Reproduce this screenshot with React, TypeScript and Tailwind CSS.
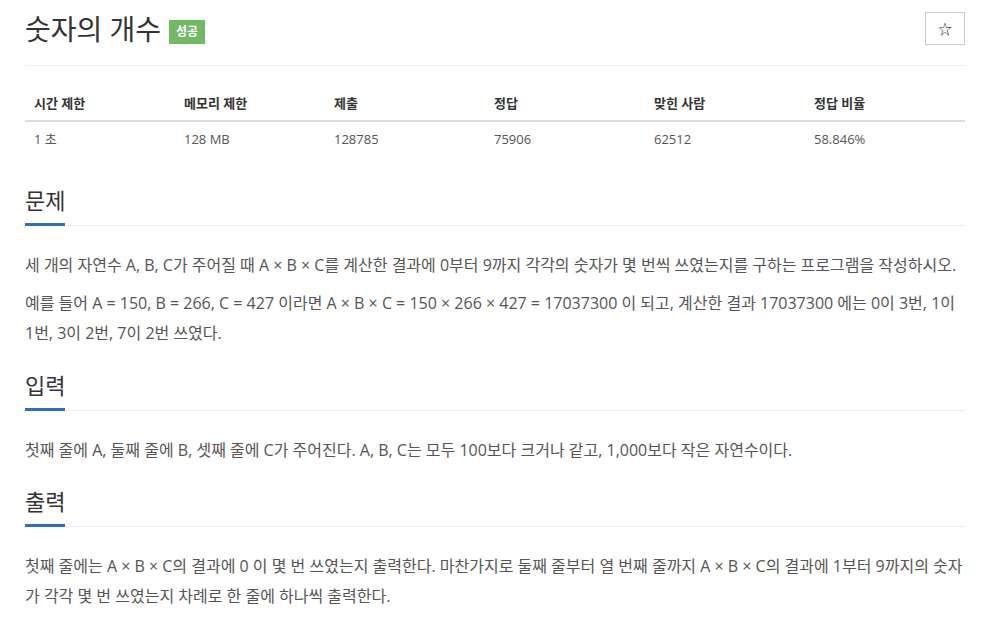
import React from 'react';

const font = { fontFamily: '"Open Sans", "Noto Sans CJK KR", sans-serif' };

const stats = [
  { label: '시간 제한', value: '1 초', w: 'w-[150px]' },
  { label: '메모리 제한', value: '128 MB', w: 'w-[150px]' },
  { label: '제출', value: '128785', w: 'w-[160px]' },
  { label: '정답', value: '75906', w: 'w-[160px]' },
  { label: '맞힌 사람', value: '62512', w: 'w-[160px]' },
  { label: '정답 비율', value: '58.846%', w: 'w-[160px]' },
];

const SectionTitle: React.FC<{ title: string }> = ({ title }) => (
  <div className="border-b border-dotted border-[#d8dce8] mb-[24px]">
    <h2 className="inline-block text-[22px] leading-[34px] text-[#333] border-b-[3px] border-[#2f6fb8] pb-[6px] mb-[-1px]">
      {title}
    </h2>
  </div>
);

const App: React.FC = () => {
  return (
    <div className="w-[989px] h-[620px] bg-white overflow-hidden pl-[25px] pr-[24px] text-[#555]" style={font}>
      <div className="flex items-start justify-between pt-[11px] pb-[18px] border-b border-[#eee]">
        <div className="flex items-center gap-[8px]">
          <h1 className="text-[28px] leading-[36px] text-[#333]">숫자의 개수</h1>
          <span className="bg-[#71b965] text-white text-[12px] font-bold leading-none px-[7px] py-[6px] mt-[5px]">성공</span>
        </div>
        <button className="w-[40px] h-[33px] mt-[1px] border border-[#ccc] flex items-center justify-center text-[#333] text-[14px]">
          ☆
        </button>
      </div>

      <div className="mt-[28px] flex border-b-2 border-[#ddd]">
        {stats.map((s) => (
          <div key={s.label} className={`${s.w} px-[9px] pb-[6px] text-[13px] font-bold text-[#333]`}>
            {s.label}
          </div>
        ))}
      </div>
      <div className="flex">
        {stats.map((s) => (
          <div key={s.label} className={`${s.w} px-[9px] pt-[8px] text-[13px] text-[#555]`}>
            {s.value}
          </div>
        ))}
      </div>

      <div className="mt-[34px]">
        <SectionTitle title="문제" />
        <div className="text-[16px] leading-[30px]">
          <p className="mb-[8px]">세 개의 자연수 A, B, C가 주어질 때 A × B × C를 계산한 결과에 0부터 9까지 각각의 숫자가 몇 번씩 쓰였는지를 구하는 프로그램을 작성하시오.</p>
          <p>예를 들어 A = 150, B = 266, C = 427 이라면 A × B × C = 150 × 266 × 427 = 17037300 이 되고, 계산한 결과 17037300 에는 0이 3번, 1이 1번, 3이 2번, 7이 2번 쓰였다.</p>
        </div>
      </div>

      <div className="mt-[20px]">
        <SectionTitle title="입력" />
        <p className="text-[16px] leading-[30px]">첫째 줄에 A, 둘째 줄에 B, 셋째 줄에 C가 주어진다. A, B, C는 모두 100보다 크거나 같고, 1,000보다 작은 자연수이다.</p>
      </div>

      <div className="mt-[19px]">
        <SectionTitle title="출력" />
        <p className="text-[16px] leading-[30px]">첫째 줄에는 A × B × C의 결과에 0 이 몇 번 쓰였는지 출력한다. 마찬가지로 둘째 줄부터 열 번째 줄까지 A × B × C의 결과에 1부터 9까지의 숫자가 각각 몇 번 쓰였는지 차례로 한 줄에 하나씩 출력한다.</p>
      </div>
    </div>
  );
};

export default App;
